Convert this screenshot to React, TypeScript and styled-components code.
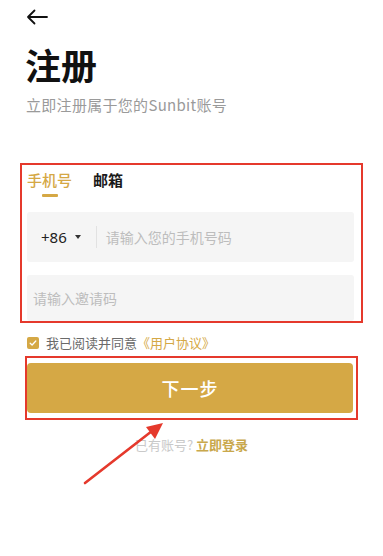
import { createGlobalStyle } from 'styled-components';
import styled from 'styled-components';

const GOLD = '#d5a845';
const RED = '#e5392c';

const GlobalStyle = createGlobalStyle`
  html, body {
    margin: 0;
    padding: 0;
    background: #ffffff;
    font-family: "Noto Sans CJK SC", "Noto Sans", sans-serif;
  }
`;

const Page = styled.div`
  position: relative;
  width: 383px;
  height: 556px;
  overflow: hidden;
  background: #fff;
`;

const Header = styled.div`
  height: 34px;
  display: flex;
  align-items: center;
  padding-left: 26px;
`;

const Title = styled.h1`
  margin: 8px 0 0 25px;
  font-size: 36px;
  line-height: 44px;
  font-weight: 700;
  color: #111;
`;

const Subtitle = styled.p`
  margin: 8px 0 0 26px;
  font-size: 15px;
  line-height: 22px;
  letter-spacing: 0.3px;
  color: #9a9a9a;
`;

const Highlight = styled.div`
  border: 2px solid ${RED};
  margin: 47px 20px 0 20px;
  padding: 4px 7px 0 5px;
`;

const Tabs = styled.div`
  display: flex;
  gap: 21px;
  height: 43px;
`;

const Tab = styled.div<{ $active?: boolean }>`
  position: relative;
  font-size: 15px;
  line-height: 22px;
  font-weight: ${(p) => (p.$active ? 500 : 700)};
  color: ${(p) => (p.$active ? GOLD : '#1a1a1a')};

  &::after {
    content: '';
    display: ${(p) => (p.$active ? 'block' : 'none')};
    position: absolute;
    left: 50%;
    top: 25px;
    width: 16px;
    height: 3px;
    margin-left: -8px;
    background: ${GOLD};
    border-radius: 1px;
  }
`;

const Field = styled.div<{ $gap?: number }>`
  display: flex;
  align-items: center;
  height: ${(p) => (p.$gap ? 46 : 50)}px;
  margin-top: ${(p) => p.$gap ?? 0}px;
  background: #f5f5f5;
  border-radius: 3px;
  padding: 0 6px;
`;

const Code = styled.div`
  display: flex;
  align-items: center;
  gap: 8px;
  padding-left: 8px;
  padding-right: 15px;
  font-family: "Noto Sans", sans-serif;
  font-size: 15px;
  color: #222;
`;

const Caret = styled.span`
  width: 0;
  height: 0;
  border-left: 3px solid transparent;
  border-right: 3px solid transparent;
  border-top: 4px solid #333;
`;

const Divider = styled.span`
  width: 1px;
  height: 22px;
  background: #e2e2e2;
  margin-right: 9px;
`;

const Placeholder = styled.span`
  font-size: 14px;
  color: #bdbdbd;
`;

const Agree = styled.div`
  display: flex;
  align-items: center;
  gap: 7px;
  margin: 11px 0 0 27px;
  font-size: 13px;
  line-height: 18px;
  color: #6a6a6a;
`;

const Check = styled.span`
  width: 12px;
  height: 12px;
  border-radius: 2px;
  background: ${GOLD};
  display: flex;
  align-items: center;
  justify-content: center;
`;

const Link = styled.span`
  color: ${GOLD};
`;

const ButtonFrame = styled.div`
  border: 2px solid ${RED};
  margin: 4px 25px 0 25px;
  padding: 5px 3px 5px 0;
`;

const Button = styled.button`
  display: block;
  width: 100%;
  height: 50px;
  border: none;
  border-radius: 4px;
  background: ${GOLD};
  color: #fff;
  font-family: inherit;
  font-size: 18px;
  font-weight: 500;
  letter-spacing: 1px;
`;

const Login = styled.div`
  margin-top: 16px;
  text-align: center;
  font-size: 13px;
  line-height: 18px;
  color: #c9c9c9;
`;

const LoginLink = styled.span`
  color: #c9a84c;
  font-weight: 700;
`;

const Pointer = styled.svg`
  position: absolute;
  left: 0;
  top: 0;
  pointer-events: none;
`;

export default function App() {
  return (
    <Page>
      <GlobalStyle />
      <Header>
        <svg width="22" height="16" viewBox="0 0 22 16">
          <path d="M21 8H2M8.5 1.5L2 8l6.5 6.5" fill="none" stroke="#111" strokeWidth="1.8" strokeLinecap="round" strokeLinejoin="round" />
        </svg>
      </Header>
      <Title>注册</Title>
      <Subtitle>立即注册属于您的Sunbit账号</Subtitle>

      <Highlight>
        <Tabs>
          <Tab $active>手机号</Tab>
          <Tab>邮箱</Tab>
        </Tabs>
        <Field>
          <Code>
            +86
            <Caret />
          </Code>
          <Divider />
          <Placeholder>请输入您的手机号码</Placeholder>
        </Field>
        <Field $gap={13}>
          <Placeholder>请输入邀请码</Placeholder>
        </Field>
      </Highlight>

      <Agree>
        <Check>
          <svg width="8" height="8" viewBox="0 0 8 8">
            <path d="M1.2 4.2l1.9 1.8L6.8 2" fill="none" stroke="#fff" strokeWidth="1.3" strokeLinecap="round" strokeLinejoin="round" />
          </svg>
        </Check>
        <span>
          我已阅读并同意<Link>《用户协议》</Link>
        </span>
      </Agree>

      <ButtonFrame>
        <Button>下一步</Button>
      </ButtonFrame>

      <Login>
        已有账号? <LoginLink>立即登录</LoginLink>
      </Login>

      <Pointer width="383" height="556" viewBox="0 0 383 556">
        <line x1="85" y1="483" x2="152" y2="431" stroke={RED} strokeWidth="2.6" strokeLinecap="round" />
        <polygon points="163,423 146,427 155,439" fill={RED} />
      </Pointer>
    </Page>
  );
}
